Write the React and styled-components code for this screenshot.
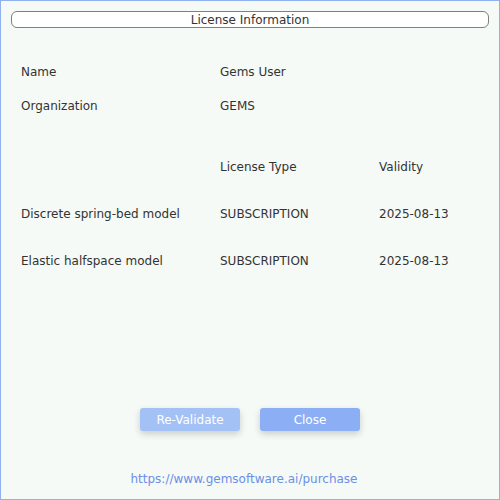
import React from 'react';
import styled, { createGlobalStyle } from 'styled-components';

const GlobalStyle = createGlobalStyle`
  html, body { margin: 0; padding: 0; }
  body { font-family: 'DejaVu Sans', 'Liberation Sans', sans-serif; }
  * { box-sizing: border-box; }
`;

// Whole dialog window
const Dialog = styled.div`
  width: 500px;
  height: 500px;
  border: 1px solid #8fb1ef;
  background: #f5faf7;
  display: flex;
  flex-direction: column;
  color: #333;
  font-size: 12px;
`;

const TitleBar = styled.div`
  margin: 10px 10px 0 10px;
  height: 17px;
  border: 1px solid #7f7f7f;
  border-radius: 6px;
  background: #fff;
  display: flex;
  align-items: center;
  justify-content: center;
  font-size: 12px;
  color: #333;
`;

const Table = styled.div`
  display: grid;
  grid-template-columns: 199px 159px 1fr;
  grid-auto-rows: ${({ rowHeight }) => rowHeight}px;
  padding-left: 20px;
  margin-top: ${({ top }) => top}px;
`;

const Cell = styled.div`
  display: flex;
  align-items: center;
  white-space: nowrap;
`;

const Actions = styled.div`
  margin-top: auto;
  display: flex;
  justify-content: center;
  gap: 20px;
`;

const Button = styled.button`
  width: 100px;
  height: 23px;
  border: none;
  border-radius: 3px;
  background: ${({ muted }) => (muted ? '#a4c1f5' : '#8caef5')};
  color: #fff;
  font-family: 'DejaVu Sans', 'Liberation Sans', sans-serif;
  font-size: 12px;
  box-shadow: 0 3px 7px rgba(0, 0, 0, 0.18);
  cursor: pointer;
`;

const Link = styled.a`
  margin: 41px 12px 13px 0;
  text-align: center;
  color: #6b8fe6;
  text-decoration: none;
  line-height: 14px;
  font-size: 12px;
`;

const products = [
  { name: 'Discrete spring-bed model', type: 'SUBSCRIPTION', validity: '2025-08-13' },
  { name: 'Elastic halfspace model', type: 'SUBSCRIPTION', validity: '2025-08-13' },
];

export default function App() {
  return (
    <>
      <GlobalStyle />
      <Dialog>
        <TitleBar>License Information</TitleBar>
        <Table top={27} rowHeight={34}>
          <Cell>Name</Cell>
          <Cell>Gems User</Cell>
          <Cell />
          <Cell>Organization</Cell>
          <Cell>GEMS</Cell>
          <Cell />
        </Table>
        <Table top={20} rowHeight={47}>
          <Cell />
          <Cell>License Type</Cell>
          <Cell>Validity</Cell>
          {products.map((p) => (
            <React.Fragment key={p.name}>
              <Cell>{p.name}</Cell>
              <Cell>{p.type}</Cell>
              <Cell>{p.validity}</Cell>
            </React.Fragment>
          ))}
        </Table>
        <Actions>
          <Button muted>Re-Validate</Button>
          <Button>Close</Button>
        </Actions>
        <Link href="#">https://www.gemsoftware.ai/purchase</Link>
      </Dialog>
    </>
  );
}
